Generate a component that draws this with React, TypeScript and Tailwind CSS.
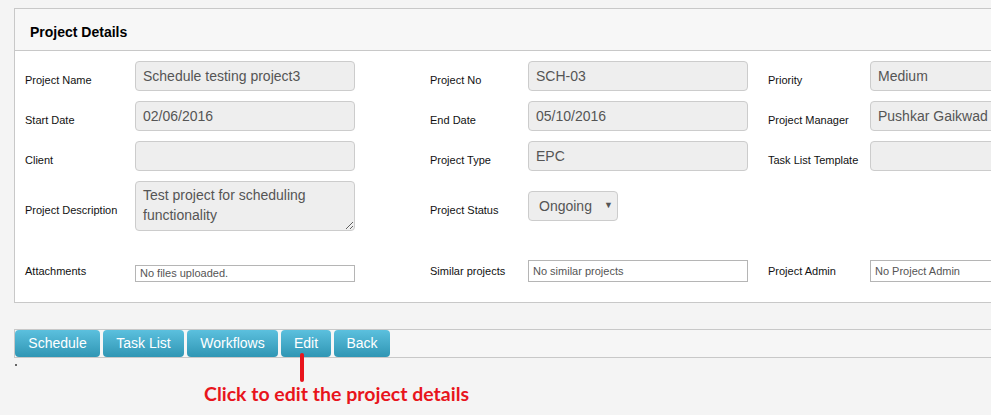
import React from "react";

const labelCls =
  "flex items-center pt-[9px] text-[11px] leading-[13px] text-[#111] whitespace-nowrap";
const inputCls =
  "flex items-center h-[30px] w-[220px] shrink-0 rounded-[4px] border border-[#cccccc] bg-[#eeeeee] px-[7px] text-[14px] text-[#555] whitespace-nowrap overflow-hidden";

function Label({ w, children, shift = true }: { w: string; children?: React.ReactNode; shift?: boolean }) {
  return (
    <div
      className={
        (shift ? labelCls : "flex items-center text-[11px] leading-[13px] text-[#111] whitespace-nowrap") +
        " shrink-0 " +
        w
      }
    >
      {children}
    </div>
  );
}

function Field({ value }: { value?: string }) {
  return <div className={inputCls}>{value}</div>;
}

function Row3({
  a,
  b,
  c,
}: {
  a: [string, string];
  b: [string, string];
  c: [string, string];
}) {
  return (
    <div className="flex h-[30px]">
      <Label w="w-[110px]">{a[0]}</Label>
      <Field value={a[1]} />
      <div className="w-[75px] shrink-0" />
      <Label w="w-[98px]">{b[0]}</Label>
      <Field value={b[1]} />
      <div className="w-[20px] shrink-0" />
      <Label w="w-[102px]">{c[0]}</Label>
      <Field value={c[1]} />
    </div>
  );
}

function SmallBox({ text, h }: { text: string; h: string }) {
  return (
    <div
      className={
        "flex items-center w-[220px] shrink-0 border border-[#b5b5b5] bg-white px-[4px] text-[11px] text-[#555] whitespace-nowrap " +
        h
      }
    >
      {text}
    </div>
  );
}

const buttons: { label: string; w: string }[] = [
  { label: "Schedule", w: "w-[85px]" },
  { label: "Task List", w: "w-[81px]" },
  { label: "Workflows", w: "w-[91px]" },
  { label: "Edit", w: "w-[50px]" },
  { label: "Back", w: "w-[56px]" },
];

export default function App() {
  return (
    <div
      className="relative w-[991px] h-[415px] overflow-hidden bg-[#f4f4f4] pt-[8px] pl-[14px]"
      style={{ fontFamily: '"Liberation Sans", Arial, sans-serif' }}
    >
      {/* Panel */}
      <div className="w-[1100px] border border-[#c8c8c8] bg-white">
        <div className="h-[42px] border-b border-[#c8c8c8] bg-[#f7f7f7] pl-[15px] pt-[15px]">
          <div className="text-[14px] leading-4 font-bold text-black">Project Details</div>
        </div>
        <div className="pl-[10px] pt-[10px] pb-[20px] flex flex-col">
          <div className="flex flex-col gap-[10px]">
            <Row3
              a={["Project Name", "Schedule testing project3"]}
              b={["Project No", "SCH-03"]}
              c={["Priority", "Medium"]}
            />
            <Row3
              a={["Start Date", "02/06/2016"]}
              b={["End Date", "05/10/2016"]}
              c={["Project Manager", "Pushkar Gaikwad"]}
            />
            <Row3 a={["Client", ""]} b={["Project Type", "EPC"]} c={["Task List Template", ""]} />
            <div className="flex h-[50px]">
              <Label w="w-[110px]">Project Description</Label>
              <textarea
                readOnly
                className="block h-[50px] w-[220px] shrink-0 rounded-[4px] border border-[#cccccc] bg-[#eeeeee] px-[7px] py-[3px] text-[14px] leading-[20px] text-[#555] outline-none"
                style={{ fontFamily: '"Liberation Sans", Arial, sans-serif' }}
                defaultValue={"Test project for scheduling functionality"}
              />
              <div className="w-[75px] shrink-0" />
              <Label w="w-[98px]">Project Status</Label>
              <div className="flex items-center">
                <div className="flex items-center h-[30px] w-[90px] rounded-[4px] border border-[#cccccc] bg-[#eeeeee] pl-[10px] text-[14px] text-[#555]">
                  <span>Ongoing</span>
                  <span className="ml-[12px] text-[9px] text-[#555]">▼</span>
                </div>
              </div>
            </div>
          </div>
          <div className="mt-[29px] flex h-[22px] items-end">
            <Label w="w-[110px] self-center" shift={false}>
              Attachments
            </Label>
            <SmallBox text="No files uploaded." h="h-[17px]" />
            <div className="w-[75px] shrink-0" />
            <Label w="w-[98px] self-center" shift={false}>
              Similar projects
            </Label>
            <SmallBox text="No similar projects" h="h-[22px]" />
            <div className="w-[20px] shrink-0" />
            <Label w="w-[102px] self-center" shift={false}>
              Project Admin
            </Label>
            <SmallBox text="No Project Admin" h="h-[22px]" />
          </div>
        </div>
      </div>

      {/* Button bar */}
      <div className="mt-[26px] w-[1100px] border-y border-l border-[#c8c8c8] bg-[#f6f6f6] flex gap-[3px]">
        {buttons.map((b) => (
          <div
            key={b.label}
            className={
              "flex h-[27px] items-center justify-center rounded-[4px] bg-gradient-to-b from-[#5bc0de] to-[#2f96b4] text-[14px] text-white " +
              b.w
            }
          >
            {b.label}
          </div>
        ))}
      </div>
      <div className="mt-[6px] ml-[1px] h-[2px] w-[2px] bg-[#666]" />

      {/* Annotation */}
      <div className="absolute left-[300px] top-[353px] h-[29px] w-[4px] rounded-[2px] bg-[#e8141c]" />
      <div
        className="absolute left-[204px] top-[382px] text-[19.5px] leading-[24px] font-bold text-[#e8141c] whitespace-nowrap"
        style={{ fontFamily: 'Lato, "Open Sans", sans-serif' }}
      >
        Click to edit the project details
      </div>
    </div>
  );
}
